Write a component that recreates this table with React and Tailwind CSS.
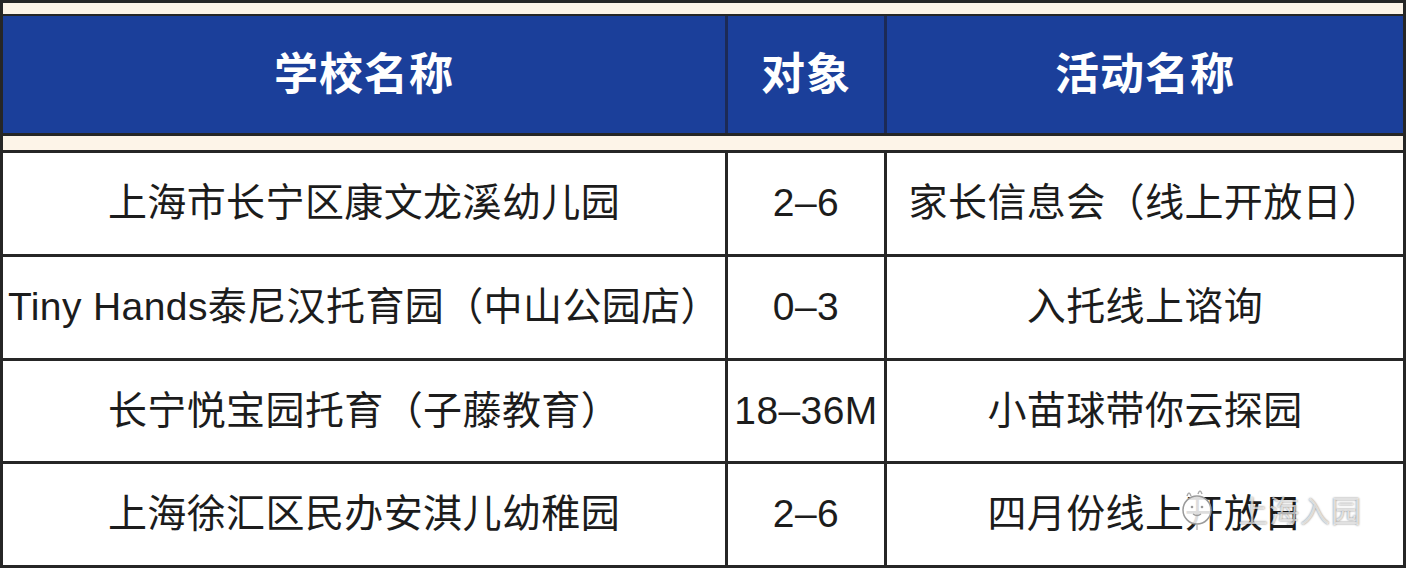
import React from "react";

const FONT = { fontFamily: '"Liberation Sans", "Noto Sans CJK SC", sans-serif' };

const rows = [
  ["上海市长宁区康文龙溪幼儿园", "2–6", "家长信息会（线上开放日）"],
  ["Tiny Hands泰尼汉托育园（中山公园店）", "0–3", "入托线上谘询"],
  ["长宁悦宝园托育（子藤教育）", "18–36M", "小苗球带你云探园"],
  ["上海徐汇区民办安淇儿幼稚园", "2–6", "四月份线上开放日"],
];

export default function App() {
  return (
    <div
      className="relative w-[1406px] h-[568px] bg-[#262626] p-[3px] flex flex-col overflow-hidden"
      style={FONT}
    >
      <div className="h-[11px] bg-[#fdf4e8]" />
      <div className="mt-[2px] h-[117px] grid grid-cols-[722px_156px_1fr] gap-x-[3px] bg-[#1c2a55]">
        {["学校名称", "对象", "活动名称"].map((t) => (
          <div
            key={t}
            className="bg-[#1b3f9a] flex items-center justify-center text-white font-bold text-[44px] tracking-[1px]"
          >
            {t}
          </div>
        ))}
      </div>
      <div className="mt-[3px] h-[14px] bg-[#fdf4e8]" />
      <div className="mt-[3px] flex-1 grid grid-cols-[722px_156px_1fr] grid-rows-4 gap-[3px]">
        {rows.map((r, i) =>
          r.map((c, j) => (
            <div
              key={i + "-" + j}
              className="bg-white flex items-center justify-center text-[#1c1c1c] text-[39px] tracking-[0.4px] whitespace-nowrap"
            >
              {c}
            </div>
          ))
        )}
      </div>

      <div className="absolute left-[1178px] top-[486px] flex items-center gap-[22px] pointer-events-none">
        <svg width="38" height="46" viewBox="0 0 38 46">
          <path d="M9 10 Q11 4 13 10" fill="none" stroke="#aaa" strokeWidth="1.5" />
          <path d="M20 8 Q22 2 24 8" fill="none" stroke="#aaa" strokeWidth="1.5" />
          <circle cx="19" cy="24" r="14" fill="rgba(255,255,255,0.85)" stroke="#9a9a9a" strokeWidth="1.5" />
          <circle cx="14" cy="21" r="1.3" fill="#999" />
          <circle cx="24" cy="21" r="1.3" fill="#999" />
          <path d="M15 28 Q19 31 23 28" fill="none" stroke="#999" strokeWidth="1.3" />
          <path d="M19 38 L19 44" stroke="#aaa" strokeWidth="1.2" />
        </svg>
        <span
          className="text-[30px] text-white/70 tracking-[1px] [text-shadow:0_0_2px_rgba(0,0,0,0.55)]"
          style={{ fontFamily: '"Noto Sans CJK SC", sans-serif' }}
        >
          上海入园
        </span>
      </div>
    </div>
  );
}
